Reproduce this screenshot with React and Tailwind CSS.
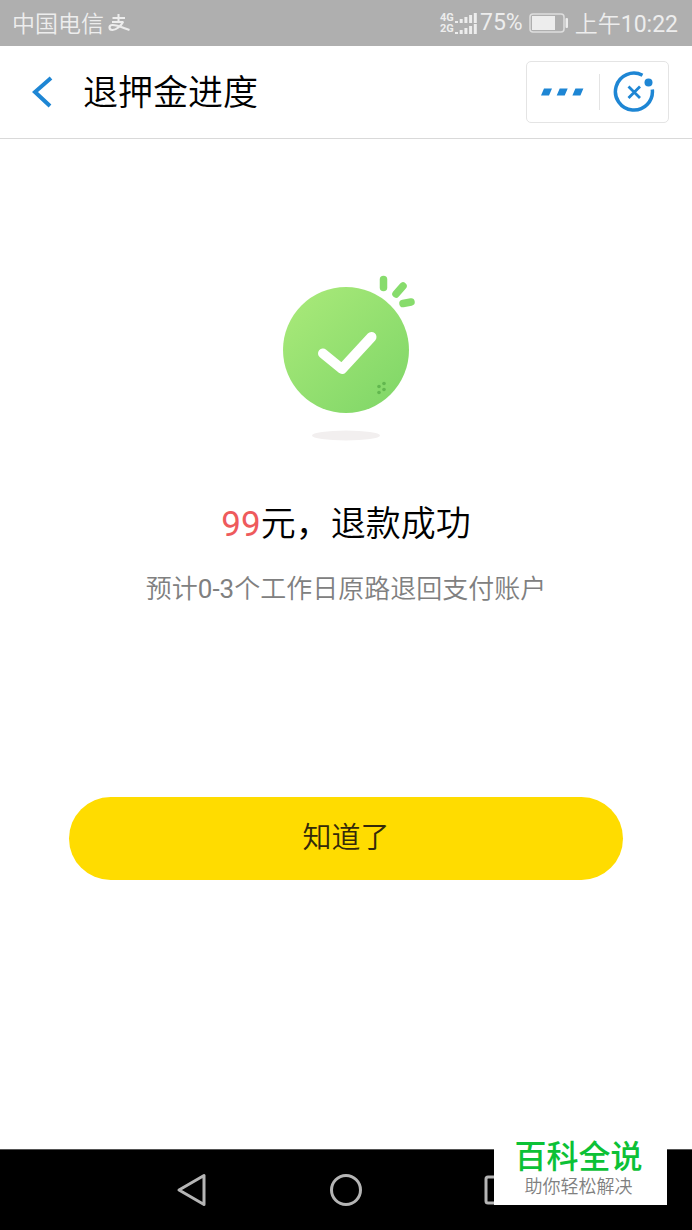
// src/pages/RefundProgress.jsx

import React from "react";

const SIGNAL_BARS = [2, 4, 6, 8, 10];

function SignalRow({ label }) {
  return (
    <div className="flex items-center">
      <span className="w-[14px] text-[11px] leading-[11px] font-bold">{label}</span>
      <svg width="24" height="10" viewBox="0 0 24 10" fill="currentColor">
        {SIGNAL_BARS.map((h, i) => (
          <rect key={h} x={1 + i * 4.7} y={10 - h} width="3" height={h} />
        ))}
      </svg>
    </div>
  );
}

function StatusBar() {
  return (
    <div className="flex h-[46px] items-center justify-between bg-[#afafaf] pr-[14px] pl-3 text-[23px] leading-7 font-[350] text-[#ededed]">
      <div className="flex items-center gap-1">
        <span className="pt-1">中国电信</span>
        <svg
          width="22"
          height="18"
          viewBox="0 0 22 18"
          fill="none"
          stroke="currentColor"
          strokeWidth="2.200"
        >
          <path d="M4.500 4H17M10.500 0v8M4 8h11.500" strokeWidth="2" />
          <path d="M15 8C13 12 8 16 4.500 16c-4 0-4-5 0-5 5 0 11 3 17 5" />
        </svg>
      </div>
      <div className="flex items-center">
        <div className="mr-[2px]">
          <SignalRow label="4G" />
          <SignalRow label="2G" />
        </div>
        <span className="font-normal">75%</span>
        <svg
          className="mr-[6px] ml-[6px]"
          width="40"
          height="20"
          viewBox="0 0 40 20"
          fill="none"
        >
          <rect x="1" y="1" width="34" height="18" rx="3" stroke="#dedede" strokeWidth="1.500" />
          <rect x="3" y="3" width="23" height="14" fill="currentColor" />
          <rect x="36.500" y="5" width="2.500" height="10" rx="1" fill="currentColor" />
        </svg>
        <span className="pt-1">
          上午<span className="font-normal">10:22</span>
        </span>
      </div>
    </div>
  );
}

function Header() {
  return (
    <header className="flex h-[93px] items-center border-b border-[#d9d9d9] pr-[23px] pl-8">
      <button type="button" aria-label="返回" className="mr-[30px]">
        <svg width="21" height="32" viewBox="0 0 21 32" fill="none" stroke="#1e86d4" strokeWidth="4">
          <path d="M19 2L3 16l15 14" />
        </svg>
      </button>
      <h1 className="flex-1 pt-1 text-[35px] leading-[46px] font-[350] text-black">
        退押金进度
      </h1>
      <div className="flex h-[62px] items-center rounded-[5px] border border-[#e4e4e4]">
        <button type="button" aria-label="更多" className="flex h-9 w-[73px] items-center justify-center border-r border-[#e4e4e4]">
          <svg width="44" height="8" viewBox="0 0 44 8" fill="#1e86d4">
            <path d="M3 0.500h8l-3 7h-8zM18.700 0.500h8l-3 7h-8zM34.400 0.500h8l-3 7h-8z" />
          </svg>
        </button>
        <button type="button" aria-label="关闭" className="flex w-[68px] items-center justify-center">
          <svg width="42" height="42" viewBox="0 0 42 42" fill="none" stroke="#1e86d4" strokeWidth="3.500">
            <path d="M29.500 4.200A18.500 18.500 0 1 0 39.300 18.500" />
            <circle cx="35.500" cy="11.500" r="4" fill="#1e86d4" stroke="none" />
            <path d="M15.500 15.500l11.500 11.500M27 15.500l-11.500 11.500" strokeWidth="2.800" />
          </svg>
        </button>
      </div>
    </header>
  );
}

function SuccessIcon() {
  return (
    <svg width="134" height="168" viewBox="0 0 134 168" fill="none" className="ml-[6px]">
      <defs>
        <linearGradient id="disc" x1="15" y1="25" x2="110" y2="125" gradientUnits="userSpaceOnUse">
          <stop offset="0" stopColor="#a6e878" />
          <stop offset="1" stopColor="#83d869" />
        </linearGradient>
      </defs>
      <circle cx="64" cy="75" r="63" fill="url(#disc)" />
      <path d="M41 78.500l19 15.500L89.500 62" stroke="#fff" strokeWidth="10" strokeLinecap="round" strokeLinejoin="round" />
      <g stroke="#87dc6c" strokeWidth="7.500" strokeLinecap="round">
        <path d="M101.500 4.500v8" />
        <path d="M121 11l-7 8" />
        <path d="M129 27l-8 1.500" />
      </g>
      <g fill="#62b74f">
        <circle cx="97" cy="111.500" r="1.800" />
        <circle cx="102" cy="108.500" r="1.800" />
        <circle cx="97" cy="117.500" r="1.800" />
        <circle cx="102" cy="114.500" r="1.800" />
      </g>
      <ellipse cx="64" cy="160.500" rx="34" ry="5" fill="#f2efef" />
    </svg>
  );
}

function NavBar() {
  return (
    <nav className="flex h-[81px] items-center justify-center gap-[122px] border-t border-[#555] bg-black">
      <button type="button" aria-label="后退">
        <svg width="32" height="34" viewBox="0 0 32 34" fill="none" stroke="#b5b5b5" strokeWidth="3" strokeLinejoin="round">
          <path d="M28 2.500v29L3 17z" />
        </svg>
      </button>
      <button type="button" aria-label="主屏幕">
        <svg width="32" height="32" viewBox="0 0 32 32" fill="none" stroke="#b5b5b5" strokeWidth="3">
          <circle cx="16" cy="16" r="14.500" />
        </svg>
      </button>
      <button type="button" aria-label="最近任务">
        <svg width="32" height="30" viewBox="0 0 32 30" fill="none" stroke="#b5b5b5" strokeWidth="3">
          <rect x="2" y="2" width="27" height="26" rx="2" />
        </svg>
      </button>
    </nav>
  );
}

export default function App() {
  return (
    <div className="relative flex min-h-screen flex-col bg-white font-[Roboto,'Noto_Sans_CJK_SC',sans-serif]">
      <StatusBar />
      <Header />

      <main className="flex flex-1 flex-col items-center px-[69px] pt-[136px]">
        <SuccessIcon />
        <p className="mt-[58px] text-[35px] leading-[48px] font-[350] text-black">
          <span className="font-normal text-[#ee5a5c]">99</span>元，退款成功
        </p>
        <p className="mt-[22px] text-[26px] leading-9 font-[350] text-[#808080]">
          预计<span className="font-normal">0-3</span>个工作日原路退回支付账户
        </p>
        <button
          type="button"
          className="mt-[190px] h-[83px] w-full rounded-full bg-[#ffdc00] text-[29px] font-[350] text-[#33290a]"
        >
          知道了
        </button>
      </main>

      <NavBar />

      <div className="absolute right-[25px] bottom-[25px] flex w-[173px] flex-col items-center bg-white pt-1 pr-1 pb-[6px]">
        <span className="text-[32px] leading-9 font-medium text-[#0cc136]">百科全说</span>
        <span className="text-[18px] leading-6 font-[350] text-[#808080]">助你轻松解决</span>
      </div>
    </div>
  );
}
